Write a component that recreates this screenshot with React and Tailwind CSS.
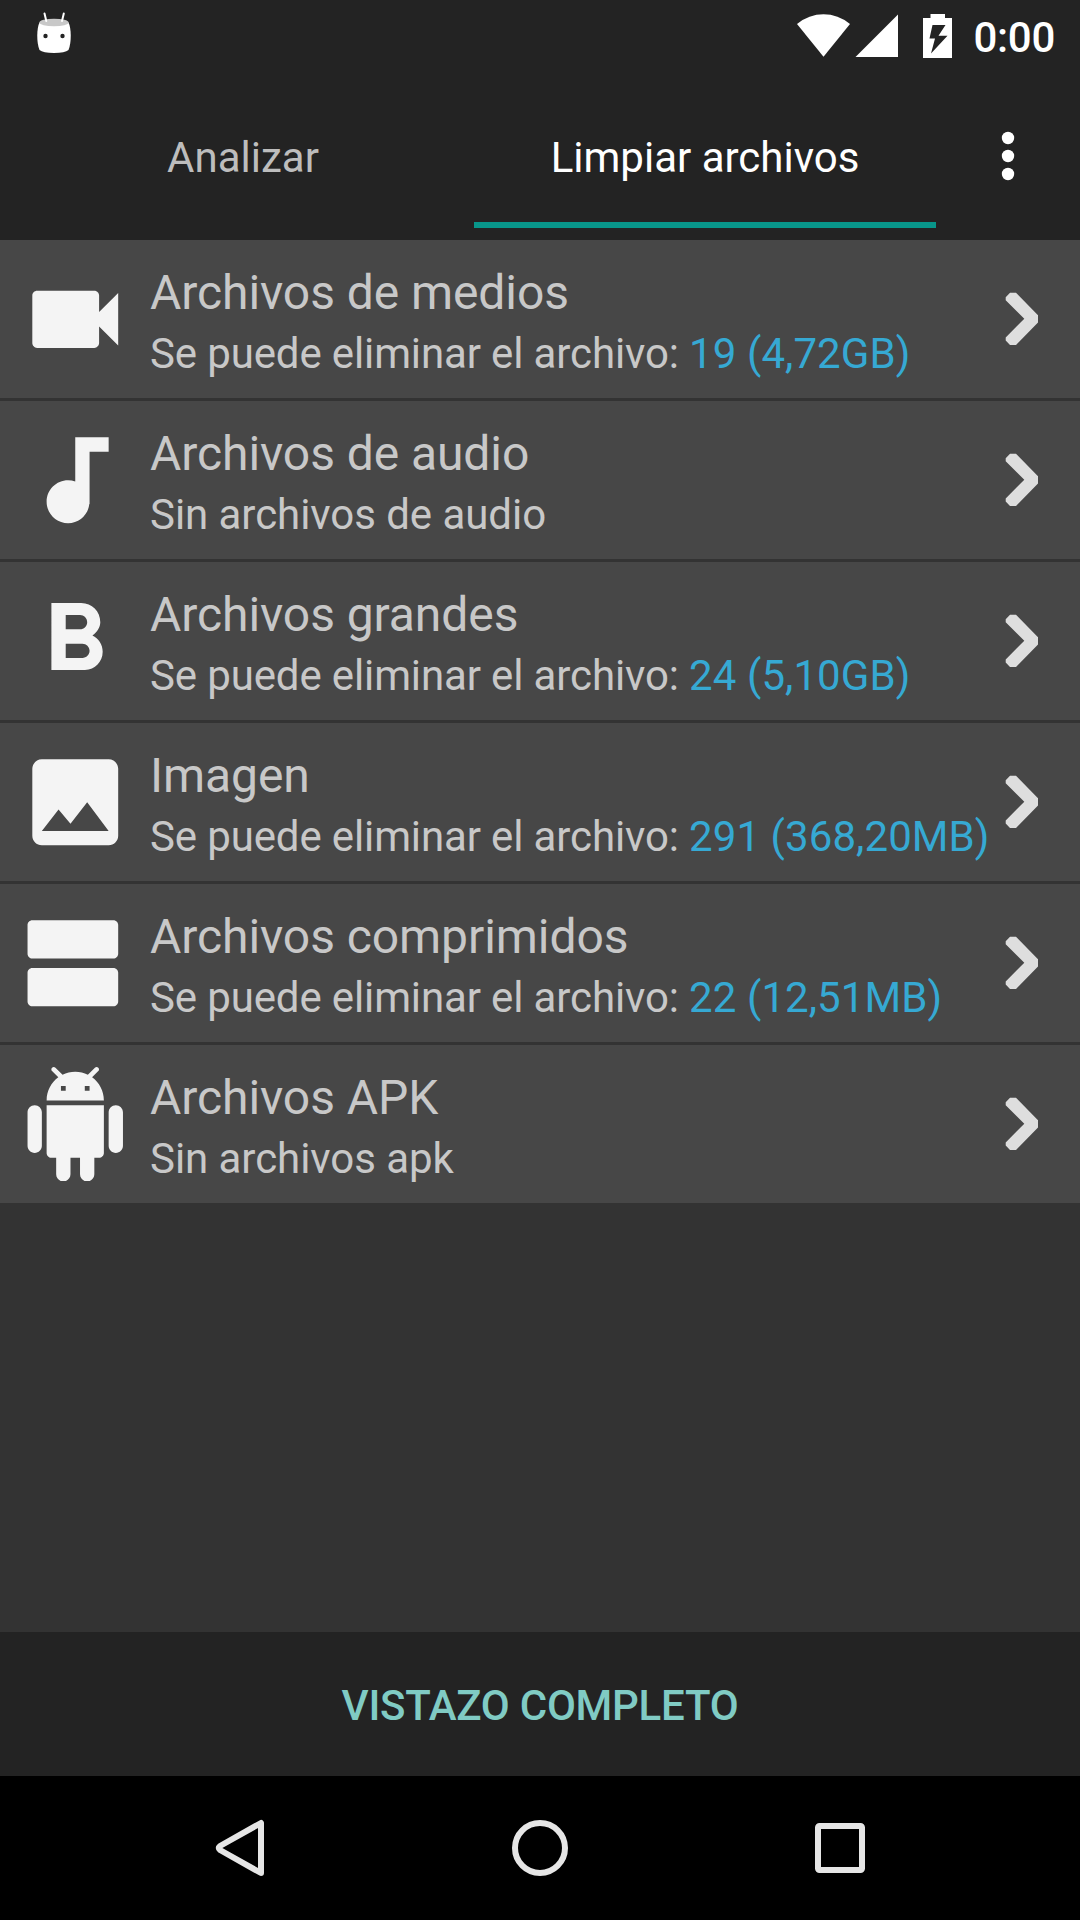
import React, { useState } from 'react';
import { MdVideocam, MdAudiotrack, MdFormatBold, MdImage } from 'react-icons/md';

const AgendaIcon = ({ className }) => (
  <svg viewBox="0 0 24 24" fill="currentColor" className={className}>
    <path d="M20 13H3c-.55 0-1 .45-1 1v6c0 .55.45 1 1 1h17c.55 0 1-.45 1-1v-6c0-.55-.45-1-1-1zm0-10H3c-.55 0-1 .45-1 1v6c0 .55.45 1 1 1h17c.55 0 1-.45 1-1V4c0-.55-.45-1-1-1z" />
  </svg>
);

const RobotIcon = ({ className }) => (
  <svg viewBox="0 0 24 24" fill="currentColor" className={className}>
    <path d="M6 18c0 .55.45 1 1 1h1v3.5c0 .83.67 1.5 1.5 1.5s1.5-.67 1.5-1.5V19h2v3.5c0 .83.67 1.5 1.5 1.5s1.5-.67 1.5-1.5V19h1c.55 0 1-.45 1-1V8H6v10zM3.5 8C2.67 8 2 8.67 2 9.5v7c0 .83.67 1.5 1.5 1.5S5 17.33 5 16.5v-7C5 8.67 4.33 8 3.5 8zm17 0c-.83 0-1.5.67-1.5 1.5v7c0 .83.67 1.5 1.5 1.5s1.5-.67 1.5-1.5v-7c0-.83-.67-1.5-1.5-1.5zm-4.97-5.84l1.3-1.3c.2-.2.2-.51 0-.71-.2-.2-.51-.2-.71 0l-1.48 1.48C13.85 1.23 12.95 1 12 1c-.96 0-1.86.23-2.66.63L7.85.15c-.2-.2-.51-.2-.71 0-.2.2-.2.51 0 .71l1.31 1.31C6.97 3.26 6 5.01 6 7h12c0-1.99-.97-3.75-2.47-4.84zM10 5H9V4h1v1zm5 0h-1V4h1v1z" />
  </svg>
);

const Chevron = () => (
  <svg width="34" height="54" viewBox="0 0 34 54" className="shrink-0 text-[#dedede]">
    <path
      fill="currentColor"
      d="M5 .7h6L33 23.3v7.2L11 53H5L.7 48.4v-3L19.3 26.8.7 8.2v-3z"
    />
  </svg>
);

const categories = [
  { id: 'media', icon: MdVideocam, title: 'Archivos de medios', detail: 'Se puede eliminar el archivo:', amount: '19 (4,72GB)' },
  { id: 'audio', icon: MdAudiotrack, title: 'Archivos de audio', detail: 'Sin archivos de audio' },
  { id: 'large', icon: MdFormatBold, title: 'Archivos grandes', detail: 'Se puede eliminar el archivo:', amount: '24 (5,10GB)' },
  { id: 'image', icon: MdImage, title: 'Imagen', detail: 'Se puede eliminar el archivo:', amount: '291 (368,20MB)' },
  { id: 'zip', icon: AgendaIcon, title: 'Archivos comprimidos', detail: 'Se puede eliminar el archivo:', amount: '22 (12,51MB)' },
  { id: 'apk', icon: RobotIcon, title: 'Archivos APK', detail: 'Sin archivos apk' },
];

const tabs = ['Analizar', 'Limpiar archivos'];

const StatusBar = () => (
  <div className="flex h-[72px] shrink-0 items-start justify-between pl-9 pr-[25px] text-white">
    <svg width="36" height="54" viewBox="0 0 36 54">
      <path fill="currentColor" d="M3.5 22.5Q18 18 32.5 22.5C35.5 28 35.5 43 32.5 50Q29 53 18 53T3.5 50C.5 43 .5 28 3.5 22.5z" />
      <ellipse cx="18" cy="22.5" rx="14.6" ry="3.8" fill="#c8c8c8" />
      <path d="M8.5 13.5L10.3 21M27.8 13.5L26 21" stroke="currentColor" strokeWidth="2" strokeLinecap="round" />
      <circle cx="9.5" cy="36" r="2.2" fill="#232323" />
      <circle cx="26.5" cy="36" r="2.2" fill="#232323" />
    </svg>
    <div className="flex items-start">
      <svg width="156" height="60" viewBox="796 0 156 60" fill="currentColor" className="mr-[22px]">
        <path d="M797 24Q809 14.3 823.5 14.3T850 24L823.5 56.8z" />
        <path d="M898 14.5V57H855.5z" />
        <path
          fillRule="evenodd"
          d="M930.5 14H945v4h7v40H923V18h7.5zM932.5 25L929.5 38.5H935L931 53.5L947.5 35.7H938.5L945.5 25z"
        />
      </svg>
      <span className="mt-[13px] text-[42px] font-medium leading-[49px] tracking-[-0.3px]">0:00</span>
    </div>
  </div>
);

export default function App() {
  const [active, setActive] = useState(1);

  return (
    <div className="flex h-[1920px] w-[1080px] flex-col overflow-hidden bg-[#232323] font-['Roboto',sans-serif]">
      <StatusBar />

      <header className="flex h-[168px] shrink-0 pb-3 pl-3">
        {tabs.map((tab, i) => (
          <button
            key={tab}
            onClick={() => setActive(i)}
            className={`flex w-[462px] items-center justify-center border-b-[6px] pt-5 text-[42px] ${
              i === active ? 'border-[#08968a] text-white' : 'border-transparent text-[#bdbdbd]'
            }`}
          >
            {tab}
          </button>
        ))}
        <button className="flex flex-1 items-center justify-center pt-3">
          <svg width="16" height="52" viewBox="0 0 16 52" fill="white">
            <circle cx="8" cy="8" r="6.2" />
            <circle cx="8" cy="26" r="6.2" />
            <circle cx="8" cy="44" r="6.2" />
          </svg>
        </button>
      </header>

      <main className="flex flex-1 flex-col gap-[3px] bg-[#333333]">
        {categories.map(({ id, icon: Icon, title, detail, amount }) => (
          <div key={id} className="flex h-[158px] items-center bg-[#474747] pl-[17.5px] pr-[41px] text-[#c8c8c8]">
            <Icon className="size-[114.5px] shrink-0 text-[#f4f4f4]" />
            <div className="ml-[18px] w-0 flex-1 whitespace-nowrap pt-[9px]">
              <div className="text-[48px] leading-[60px] tracking-[-0.07px]">{title}</div>
              <div className="text-[42px] leading-[61px]">
                <span className={amount ? 'tracking-[-0.13px]' : 'tracking-[-0.05px]'}>{detail} </span>
                {amount && <span className="tracking-[0.08px] text-[#36a9d3]">{amount}</span>}
              </div>
            </div>
            <Chevron />
          </div>
        ))}
      </main>

      <button className="h-36 shrink-0 pt-[2px] text-[42px] font-medium tracking-[-0.25px] text-[#80cbc4]">
        VISTAZO COMPLETO
      </button>

      <nav className="flex h-36 shrink-0 items-center justify-center gap-[240px] bg-black text-[#e6e6e6]">
        <svg width="60" height="60" viewBox="0 0 60 60" fill="none" stroke="currentColor" strokeWidth="6" strokeLinejoin="round">
          <path d="M51 5V55L10 32Q7.5 30 10 28z" />
        </svg>
        <svg width="60" height="60" viewBox="0 0 60 60" fill="none" stroke="currentColor" strokeWidth="6">
          <circle cx="30" cy="30" r="25" />
        </svg>
        <svg width="60" height="60" viewBox="0 0 60 60" fill="none" stroke="currentColor" strokeWidth="6">
          <rect x="8" y="8" width="44" height="44" rx="1.5" />
        </svg>
      </nav>
    </div>
  );
}
